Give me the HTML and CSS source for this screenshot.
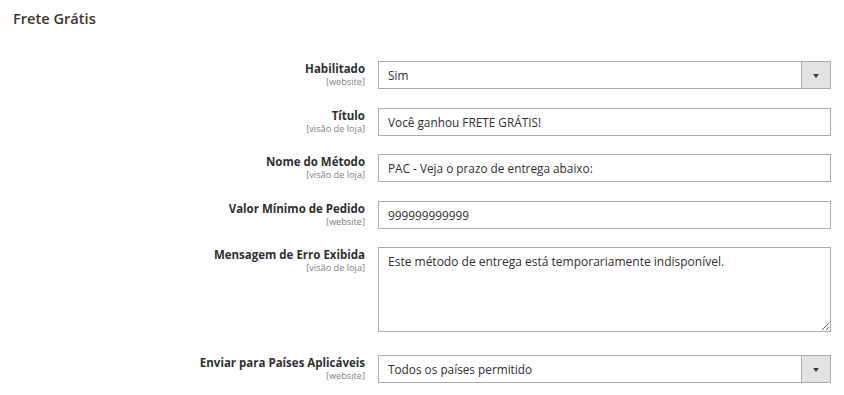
FILE: index.html
```html
<!DOCTYPE html>
<html lang="pt-BR">
<head>
  <meta charset="UTF-8" />
  <title>Frete Grátis</title>
  <link rel="stylesheet" href="styles.css">
</head>
<body>
  <section class="section">
    <h3 class="section-title">Frete Grátis</h3>

    <form class="config-form">
      <div class="field">
        <label class="field-label" for="ativo">
          <span class="label-text">Habilitado</span>
          <span class="scope">[website]</span>
        </label>
        <div class="select-wrap">
          <select id="ativo" class="control">
            <option>Sim</option>
            <option>Não</option>
          </select>
          <span class="select-arrow"></span>
        </div>
      </div>

      <div class="field">
        <label class="field-label" for="titulo">
          <span class="label-text">Título</span>
          <span class="scope">[visão de loja]</span>
        </label>
        <input type="text" id="titulo" class="control input" value="Você ganhou FRETE GRÁTIS!" />
      </div>

      <div class="field">
        <label class="field-label" for="metodo">
          <span class="label-text">Nome do Método</span>
          <span class="scope">[visão de loja]</span>
        </label>
        <input type="text" id="metodo" class="control input" value="PAC - Veja o prazo de entrega abaixo:" />
      </div>

      <div class="field">
        <label class="field-label" for="minimo">
          <span class="label-text">Valor Mínimo de Pedido</span>
          <span class="scope">[website]</span>
        </label>
        <input type="text" id="minimo" class="control input" value="999999999999" />
      </div>

      <div class="field field-textarea">
        <label class="field-label" for="erro">
          <span class="label-text">Mensagem de Erro Exibida</span>
          <span class="scope">[visão de loja]</span>
        </label>
        <textarea id="erro" class="control textarea">Este método de entrega está temporariamente indisponível.</textarea>
      </div>

      <div class="field">
        <label class="field-label" for="paises">
          <span class="label-text">Enviar para Países Aplicáveis</span>
          <span class="scope">[website]</span>
        </label>
        <div class="select-wrap">
          <select id="paises" class="control">
            <option>Todos os países permitido</option>
            <option>Países específicos</option>
          </select>
          <span class="select-arrow"></span>
        </div>
      </div>
    </form>
  </section>
</body>
</html>
```

FILE: styles.css
```css
body {
  margin: 0;
  padding: 0;
  font-family: "Open Sans", "Liberation Sans", sans-serif;
  background: #fff;
  color: #303030;
}
.section {
  padding: 0 13px;
}
.section-title {
  margin: 0;
  padding-top: 8px;
  font-size: 14.6px;
  line-height: 20px;
  font-weight: 600;
  color: #41362f;
}
.config-form {
  padding-top: 33px;
}
.field {
  display: grid;
  grid-template-columns: 352px 453px;
  column-gap: 13px;
  margin-bottom: 18.5px;
}
.field-textarea {
  margin-bottom: 23px;
}
.field-label {
  display: flex;
  flex-direction: column;
  align-items: flex-end;
  text-align: right;
}
.label-text {
  font-size: 11.5px;
  font-weight: 700;
  line-height: 15px;
  color: #303030;
}
.scope {
  font-size: 9.2px;
  line-height: 11px;
  color: #808080;
}
.control {
  box-sizing: border-box;
  font-family: inherit;
  font-size: 11.8px;
  color: #303030;
  background: #fff;
  border: 1px solid #adadad;
  border-radius: 0;
  margin: 0;
  outline: none;
}
.input {
  width: 100%;
  height: 28px;
  padding: 0 9px;
}
.textarea {
  width: 100%;
  height: 85px;
  padding: 6px 9px;
  font-size: 12px;
  line-height: 16px;
  resize: both;
}
.select-wrap {
  display: flex;
  height: 28px;
  box-sizing: border-box;
  border: 1px solid #adadad;
}
.select-wrap select {
  flex: 1;
  height: 100%;
  border: none;
  padding: 0 9px;
  appearance: none;
  -webkit-appearance: none;
}
.select-arrow {
  width: 28px;
  background: #e3e3e3;
  border-left: 1px solid #adadad;
  display: flex;
  align-items: center;
  justify-content: center;
}
.select-arrow::after {
  content: "";
  border-left: 3.5px solid transparent;
  border-right: 3.5px solid transparent;
  border-top: 4px solid #41362f;
  margin-top: 1px;
}
```
